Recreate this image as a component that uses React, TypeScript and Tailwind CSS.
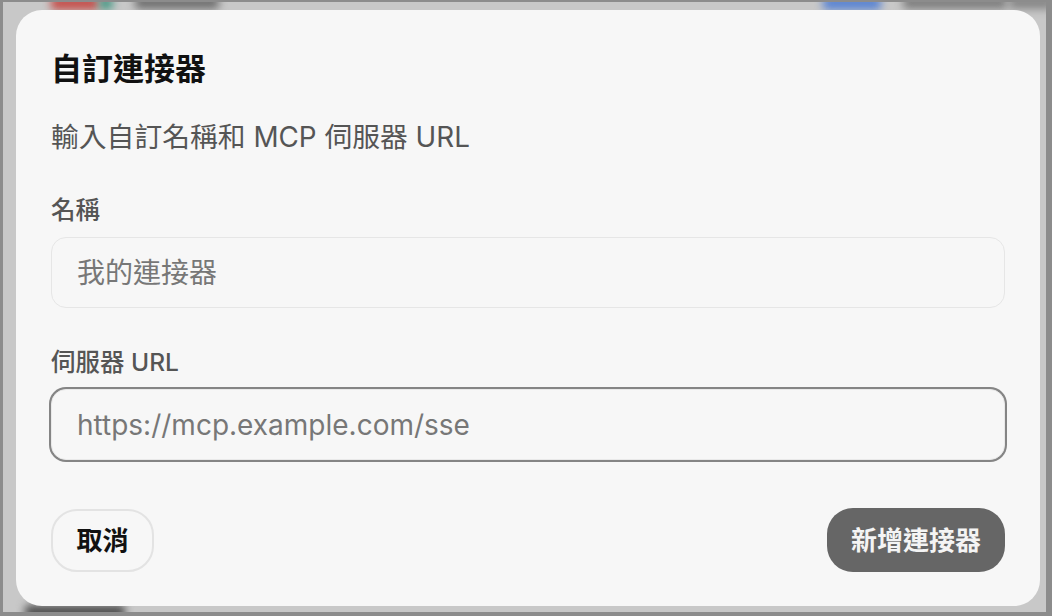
import React from 'react';

const font = { fontFamily: 'Inter, "Noto Sans CJK TC", sans-serif' };

function Field({ label, placeholder, focused }: { label: string; placeholder: string; focused?: boolean }) {
  return (
    <div className="flex flex-col gap-[7px]">
      <label className="h-[40px] leading-[40px] text-[24.5px] font-medium text-[#555555]">{label}</label>
      <input
        type="text"
        placeholder={placeholder}
        className={
          focused
            ? 'h-[71px] w-full rounded-[15px] border border-[#e9e9e9] bg-[#f7f7f7] px-[25px] text-[28px] text-[#222] placeholder:text-[#777777] outline-none ring-2 ring-[#858585]'
            : 'h-[71px] w-full rounded-[15px] border border-[#e6e6e6] bg-[#f7f7f7] px-[25px] text-[28px] text-[#222] placeholder:text-[#777777] outline-none'
        }
      />
    </div>
  );
}

export default function App() {
  return (
    <div className="w-[1052px] h-[616px] bg-[#8c8c8c] pt-[2px] pl-[3px] pr-[6px] pb-[4px]" style={font}>
      <div className="relative w-full h-full bg-[#c8c8c8] overflow-hidden pt-[8px] pl-[13px]">
        {/* app content peeking around the sheet */}
        <div className="absolute left-[48px] top-[-6px] w-[48px] h-[14px] rounded bg-[#c4504c] blur-[4px]" />
        <div className="absolute left-[96px] top-[-6px] w-[14px] h-[14px] rounded bg-[#4d9a87] blur-[4px]" />
        <div className="absolute left-[132px] top-[-6px] w-[84px] h-[13px] rounded bg-[#6e6e6e] blur-[4px]" />
        <div className="absolute left-[820px] top-[-6px] w-[58px] h-[14px] rounded bg-[#5a84d2] blur-[4px]" />
        <div className="absolute left-[900px] top-[-6px] w-[104px] h-[13px] rounded bg-[#7c7c7c] blur-[4px]" />
        <div className="absolute left-[1006px] top-[-6px] w-[44px] h-[13px] rounded bg-[#858585] blur-[4px]" />
        <div className="absolute left-[22px] top-[603px] w-[100px] h-[14px] rounded bg-[#4f4f4f] blur-[4px]" />

        <div className="relative flex flex-col w-[1024px] h-[596px] rounded-[26px] bg-[#f7f7f7] pt-[39px] px-[35px]">
          <h2 className="h-[40px] leading-[40px] text-[31px] font-bold text-[#111111]">自訂連接器</h2>
          <p className="mt-[28px] h-[40px] leading-[40px] text-[27.8px] text-[#555555]">輸入自訂名稱和 MCP 伺服器 URL</p>

          <div className="mt-[33px] flex flex-col gap-[34px]">
            <Field label="名稱" placeholder="我的連接器" />
            <Field label="伺服器 URL" placeholder="https://mcp.example.com/sse" focused />
          </div>

          <div className="mt-[48px] flex items-center justify-between">
            <button className="h-[63px] w-[103px] rounded-[26px] border-2 border-[#e3e3e3] bg-[#f7f7f7] text-[26px] font-bold text-[#111111]">
              取消
            </button>
            <button className="h-[64px] w-[178px] rounded-[26px] bg-[#666666] text-[26px] font-bold text-[#f4f4f4]">
              新增連接器
            </button>
          </div>
        </div>
      </div>
    </div>
  );
}
